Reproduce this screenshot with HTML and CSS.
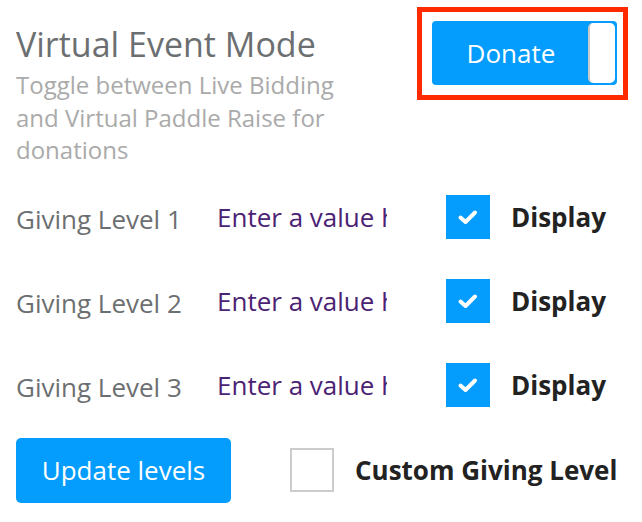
FILE: index.html
```html
<!DOCTYPE html>
<html>
<head>
<meta charset="utf-8">
<link rel="stylesheet" href="styles.css">
</head>
<body>
<div class="page">
  <div class="header">
    <div class="intro">
      <h1 class="title">Virtual Event Mode</h1>
      <p class="desc">Toggle between Live Bidding and Virtual Paddle Raise for donations</p>
    </div>
    <div class="highlight">
      <div class="toggle">
        <span class="toggle-label">Donate</span>
        <span class="knob"></span>
      </div>
    </div>
  </div>
  <div class="levels">
    <div class="level">
      <span class="level-label">Giving Level 1</span>
      <input class="level-input" type="text" value="Enter a value here">
      <span class="check on"><svg viewBox="0 0 44 44" width="44" height="44"><path d="M14.5 22.5 L19.5 27 L29 17.5" fill="none" stroke="#fff" stroke-width="4" stroke-linecap="round" stroke-linejoin="round"/></svg></span>
      <span class="check-label">Display</span>
    </div>
    <div class="level">
      <span class="level-label">Giving Level 2</span>
      <input class="level-input" type="text" value="Enter a value here">
      <span class="check on"><svg viewBox="0 0 44 44" width="44" height="44"><path d="M14.5 22.5 L19.5 27 L29 17.5" fill="none" stroke="#fff" stroke-width="4" stroke-linecap="round" stroke-linejoin="round"/></svg></span>
      <span class="check-label">Display</span>
    </div>
    <div class="level">
      <span class="level-label">Giving Level 3</span>
      <input class="level-input" type="text" value="Enter a value here">
      <span class="check on"><svg viewBox="0 0 44 44" width="44" height="44"><path d="M14.5 22.5 L19.5 27 L29 17.5" fill="none" stroke="#fff" stroke-width="4" stroke-linecap="round" stroke-linejoin="round"/></svg></span>
      <span class="check-label">Display</span>
    </div>
  </div>
  <div class="footer">
    <button class="update-btn">Update levels</button>
    <span class="check off"></span>
    <span class="check-label">Custom Giving Level</span>
  </div>
</div>
</body>
</html>
```
FILE: styles.css
```css
* { box-sizing: border-box; }
html, body { margin: 0; padding: 0; background: #fff; }
body { font-family: "Open Sans", "Noto Sans", sans-serif; }
.page { width: 642px; height: 522px; padding: 0 16px; overflow: hidden; }

.header { display: flex; justify-content: space-between; align-items: flex-start; }
.intro { width: 340px; padding-top: 24px; }
.title { margin: 0; font-size: 34px; line-height: 40px; font-weight: 400; color: #6c6f71; }
.desc { margin: 5px 0 0; font-size: 24px; line-height: 32.5px; color: #aaaaaa; }

.highlight { margin-top: 7px; margin-right: -2px; width: 211px; height: 93px; border: 5px solid #ff2a00; padding: 9px 6px 0 10px; }
.toggle { position: relative; width: 185px; height: 64px; background: #049dfd; border-radius: 4px; display: flex; align-items: center; }
.toggle-label { width: 158px; text-align: center; color: #fff; font-size: 26px; }
.knob { position: absolute; right: 2px; top: 2px; width: 27px; height: 60px; background: #fff; border-radius: 5px; border-left: 2px solid #c9c9c9; }

.levels { margin-top: 28px; display: flex; flex-direction: column; gap: 40px; }
.level { display: grid; grid-template-columns: 201px 229px 44px auto; align-items: center; height: 44px; }
.level-label { font-size: 26px; color: #6c6f71; padding-top: 4px; }
.level-input { width: 170px; border: 0; padding: 0; margin: 0; font-family: inherit; font-size: 26px; color: #4b2274; background: transparent; outline: none; }
.check { display: block; width: 44px; height: 44px; }
.check.on { background: #049dfd; }
.check.off { border: 2px solid #cccccc; background: #fff; }
.check svg { display: block; }
.check-label { font-size: 26px; font-weight: 700; color: #222; padding-left: 21px; }

.footer { margin-top: 31px; display: flex; align-items: center; }
.update-btn { width: 215px; height: 65px; border: 0; border-radius: 5px; background: #049dfd; color: #fff; font-family: inherit; font-size: 26px; padding: 0; margin-right: 59px; }
.footer .check-label { padding-left: 21px; }
```
